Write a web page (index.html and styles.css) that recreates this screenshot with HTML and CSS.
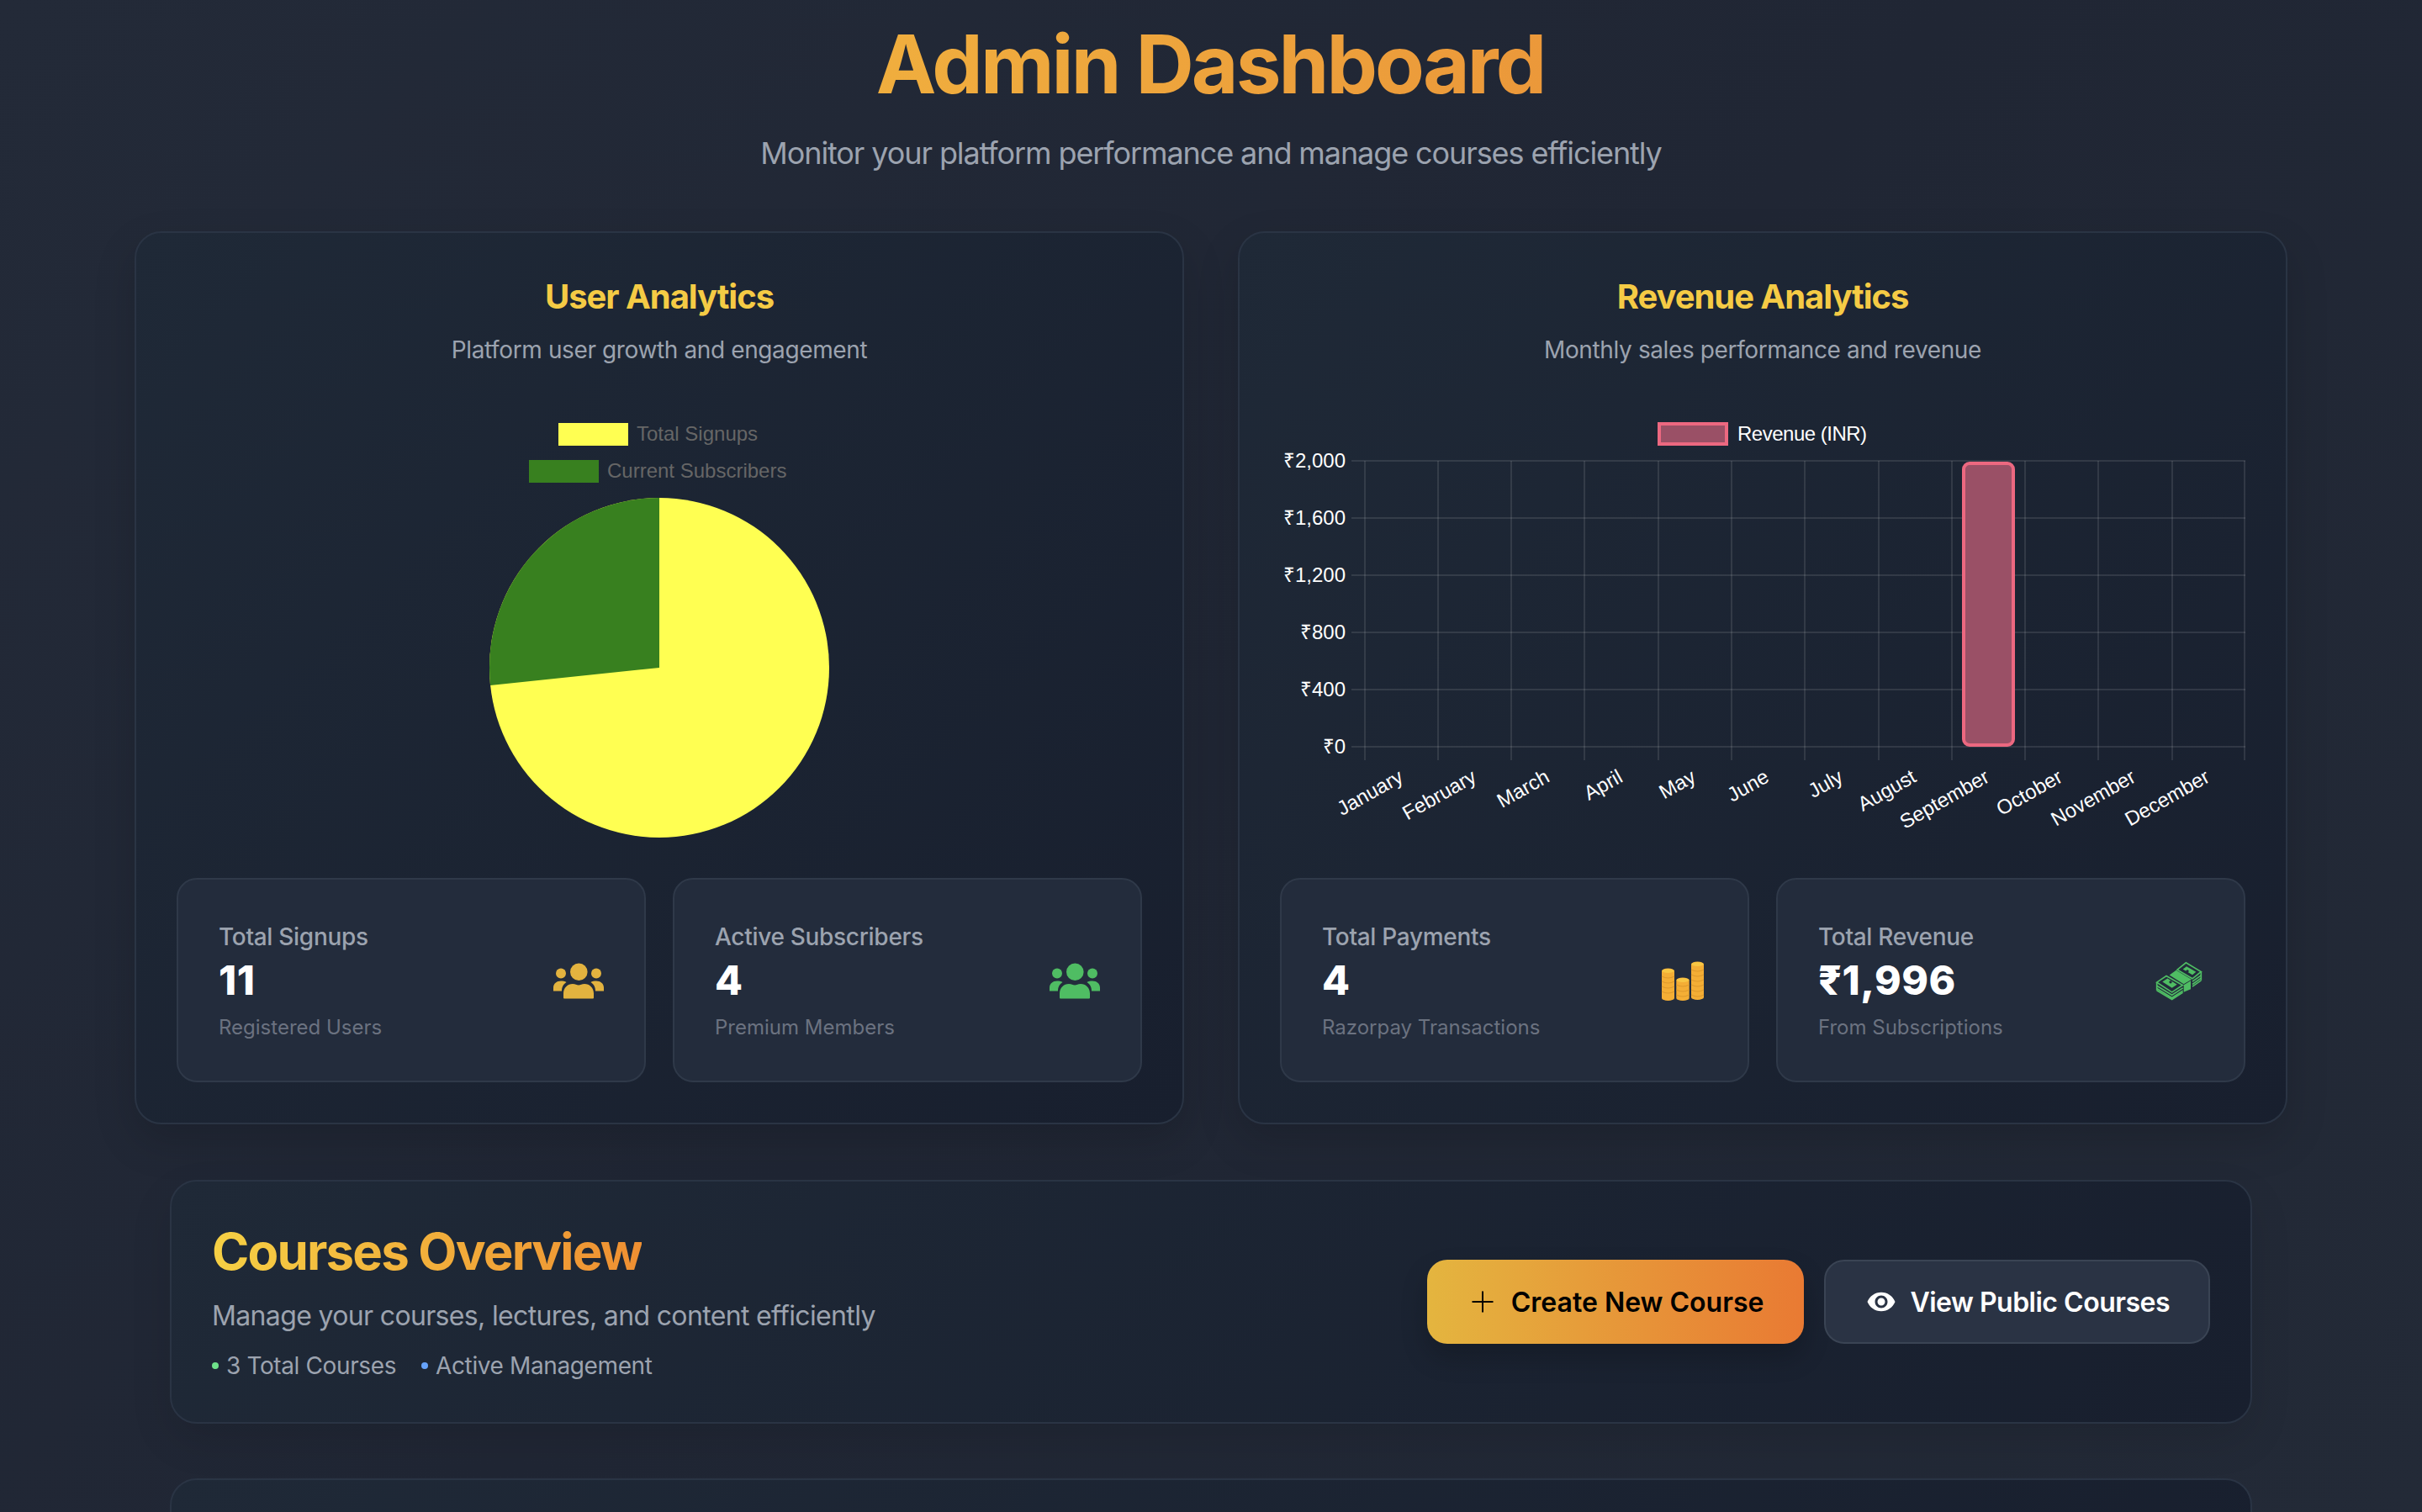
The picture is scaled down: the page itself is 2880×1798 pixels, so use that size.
FILE: index.html
```html
<!DOCTYPE html>
<html lang="en">
<head>
<meta charset="utf-8">
<title>Admin Dashboard</title>
<link rel="stylesheet" href="styles.css">
</head>
<body>
<main class="page">
  <header class="hero">
    <h1 class="hero-title">Admin Dashboard</h1>
    <p class="hero-sub">Monitor your platform performance and manage courses efficiently</p>
  </header>

  <section class="analytics">
    <article class="panel">
      <h2 class="panel-title">User Analytics</h2>
      <p class="panel-sub">Platform user growth and engagement</p>
      <svg class="chart" viewBox="210 469 1148 543" width="1148" height="543">
        <rect x="664" y="503" width="83" height="27" fill="#ffff52"/>
        <text class="legend-muted" x="757" y="524">Total Signups</text>
        <rect x="629" y="547" width="83" height="27" fill="#38801f"/>
        <text class="legend-muted" x="722" y="568">Current Subscribers</text>
        <circle cx="784" cy="794" r="202" fill="#ffff52"/>
        <path d="M784 794 L583.100 815.100 A202 202 0 0 1 784 592 Z" fill="#38801f"/>
      </svg>
      <div class="stats">
        <div class="stat">
          <div class="stat-text">
            <p class="stat-label">Total Signups</p>
            <p class="stat-value">11</p>
            <p class="stat-note">Registered Users</p>
          </div>
          <svg class="stat-icon" viewBox="0 -9.500 60 60" width="60" height="60" fill="#e3b33f">
            <circle cx="30.300" cy="10.300" r="10.300"/><circle cx="9" cy="12" r="6"/><circle cx="51" cy="12" r="6"/>
            <path d="M12 41V36C12 29 17 24.500 23 24.500C26 24.500 28 26 30 26C32 26 34 24.500 37 24.500C43 24.500 48 29 48 36V41Q48 42 47 42H13Q12 42 12 41Z"/>
            <path d="M0 33V29C0 24 4 21 9 21C11 21 14 21 15.500 22.500C12 25 10 28 10 33Z"/>
            <path d="M60 33V29C60 24 56 21 51 21C49 21 46 21 44.500 22.500C48 25 50 28 50 33Z"/>
          </svg>
        </div>
        <div class="stat">
          <div class="stat-text">
            <p class="stat-label">Active Subscribers</p>
            <p class="stat-value">4</p>
            <p class="stat-note">Premium Members</p>
          </div>
          <svg class="stat-icon" viewBox="0 -9.500 60 60" width="60" height="60" fill="#4fbd63">
            <circle cx="30.300" cy="10.300" r="10.300"/><circle cx="9" cy="12" r="6"/><circle cx="51" cy="12" r="6"/>
            <path d="M12 41V36C12 29 17 24.500 23 24.500C26 24.500 28 26 30 26C32 26 34 24.500 37 24.500C43 24.500 48 29 48 36V41Q48 42 47 42H13Q12 42 12 41Z"/>
            <path d="M0 33V29C0 24 4 21 9 21C11 21 14 21 15.500 22.500C12 25 10 28 10 33Z"/>
            <path d="M60 33V29C60 24 56 21 51 21C49 21 46 21 44.500 22.500C48 25 50 28 50 33Z"/>
          </svg>
        </div>
      </div>
    </article>

    <article class="panel">
      <h2 class="panel-title">Revenue Analytics</h2>
      <p class="panel-sub">Monthly sales performance and revenue</p>
      <svg class="chart" viewBox="1522 469 1148 543" width="1148" height="543">
        <rect x="1973" y="504" width="80" height="24" fill="#9a5066" stroke="#ec6880" stroke-width="4"/>
        <text class="legend-light" x="2066" y="524">Revenue (INR)</text>
        <g class="grid">
          <path d="M1607 548H2670M1607 616H2670M1607 684H2670M1607 752H2670M1607 820H2670M1607 888H2670"/>
          <path d="M1623 548V904M1710 548V904M1797 548V904M1884 548V904M1972 548V904M2059 548V904M2146 548V904M2234 548V904M2321 548V904M2408 548V904M2495 548V904M2583 548V904M2669 548V904"/>
        </g>
        <rect x="2335" y="551" width="59" height="335" rx="7" fill="#9a5066" stroke="#ec6880" stroke-width="4"/>
        <g class="y-labels">
          <text x="1600" y="556">₹2,000</text>
          <text x="1600" y="624">₹1,600</text>
          <text x="1600" y="692">₹1,200</text>
          <text x="1600" y="760">₹800</text>
          <text x="1600" y="828">₹400</text>
          <text x="1600" y="896">₹0</text>
        </g>
        <g class="x-labels">
          <text transform="translate(1667 923) rotate(-29.500)">January</text>
          <text transform="translate(1754 923) rotate(-29.500)">February</text>
          <text transform="translate(1841 923) rotate(-29.500)">March</text>
          <text transform="translate(1928 923) rotate(-29.500)">April</text>
          <text transform="translate(2015 923) rotate(-29.500)">May</text>
          <text transform="translate(2102 923) rotate(-29.500)">June</text>
          <text transform="translate(2190 923) rotate(-29.500)">July</text>
          <text transform="translate(2277 923) rotate(-29.500)">August</text>
          <text transform="translate(2364 923) rotate(-29.500)">September</text>
          <text transform="translate(2451 923) rotate(-29.500)">October</text>
          <text transform="translate(2538 923) rotate(-29.500)">November</text>
          <text transform="translate(2626 923) rotate(-29.500)">December</text>
        </g>
      </svg>
      <div class="stats">
        <div class="stat">
          <div class="stat-text">
            <p class="stat-label">Total Payments</p>
            <p class="stat-value">4</p>
            <p class="stat-note">Razorpay Transactions</p>
          </div>
          <svg class="stat-icon" viewBox="0 0 60 60" width="60" height="60">
            <path class="coin-body" d="M6 18.500A7.500 3 0 0 1 21 18.500V51A7.500 3 0 0 1 6 51Z"/>
            <path class="coin-body" d="M23.300 29.500A7.700 3 0 0 1 38.700 29.500V51A7.700 3 0 0 1 23.300 51Z"/>
            <path class="coin-body" d="M41 10.500A7.500 3 0 0 1 56 10.500V50A7.500 3 0 0 1 41 50Z"/>
            <path class="coin-bands" d="M6 25Q13.500 29 21 25M6 31Q13.500 35 21 31M6 37Q13.500 41 21 37M6 43Q13.500 47 21 43M23.300 35Q31 39 38.700 35M23.300 41Q31 45 38.700 41M23.300 47Q31 51 38.700 47M41 17Q48.500 21 56 17M41 23Q48.500 27 56 23M41 29Q48.500 33 56 29M41 35Q48.500 39 56 35M41 41Q48.500 45 56 41M41 47Q48.500 51 56 47"/>
            <ellipse class="coin-top" cx="13.500" cy="18.500" rx="7" ry="2.500"/>
            <ellipse class="coin-top" cx="31" cy="29.500" rx="7.200" ry="2.500"/>
            <ellipse class="coin-top" cx="48.500" cy="10.500" rx="7" ry="2.500"/>
          </svg>
        </div>
        <div class="stat">
          <div class="stat-text">
            <p class="stat-label">Total Revenue</p>
            <p class="stat-value">₹1,996</p>
            <p class="stat-note">From Subscriptions</p>
          </div>
          <svg class="stat-icon" viewBox="177 46.500 180 180" width="60" height="60">
            <path class="money-line" d="M191 155L245 188L284 163M191 165L245 198L284 173M191 172L245 204L284 179M318 140L349 118M318 150L349 128M318 158L349 136"/>
            <path class="money-line" d="M191 143V172M349 105V136"/>
            <polygon class="money-outline" points="191,143 225,120 283,153 245,178"/>
            <polygon class="money-fill" points="211,141 229,129 263,151 245,163"/>
            <circle class="money-hole" cx="240" cy="142" r="5"/>
            <polygon class="money-outline" points="264,98 295,73 349,105 318,130"/>
            <polygon class="money-fill" points="284,96 297,86 331,106 318,116"/>
            <circle class="money-hole" cx="300" cy="103" r="5"/>
            <polygon class="money-fill" points="236,117 260,100 315,133 287,149"/>
            <polygon class="money-fill" points="287,152 312,137 312,167 287,178"/>
          </svg>
        </div>
      </div>
    </article>
  </section>

  <section class="overview">
    <div class="overview-text">
      <h2 class="overview-title">Courses Overview</h2>
      <p class="overview-sub">Manage your courses, lectures, and content efficiently</p>
      <div class="pills">
        <span class="pill"><span class="dot dot-green"></span>3 Total Courses</span>
        <span class="pill"><span class="dot dot-blue"></span>Active Management</span>
      </div>
    </div>
    <div class="actions">
      <button class="btn btn-primary">
        <svg viewBox="0 0 36 36" width="36" height="36" class="btn-icon"><path d="M18 5.500V30.500M5.500 18H30.500" stroke="#000" stroke-width="2" fill="none"/></svg>
        Create New Course
      </button>
      <button class="btn btn-secondary">
        <svg viewBox="0 0 24 24" width="36" height="36" class="btn-icon" fill="#fff"><path fill-rule="evenodd" d="M12 4.500C7 4.500 2.730 7.610 1 12c1.730 4.390 6 7.500 11 7.500s9.270-3.110 11-7.500c-1.730-4.390-6-7.500-11-7.500zM12 17c-2.760 0-5-2.240-5-5s2.240-5 5-5 5 2.240 5 5-2.240 5-5 5zm0-8c-1.660 0-3 1.340-3 3s1.340 3 3 3 3-1.340 3-3-1.340-3-3-3z"/></svg>
        View Public Courses
      </button>
    </div>
  </section>

  <section class="next-panel"></section>
</main>
</body>
</html>
```

FILE: styles.css
```css
* { box-sizing: border-box; }
html, body { margin: 0; padding: 0; }
body {
  height: 1798px;
  overflow: hidden;
  background: linear-gradient(135deg, #232a38 0%, #202634 50%, #232a37 100%);
  font-family: Inter, "Noto Sans", sans-serif;
  color: #fff;
}
p, h1, h2 { margin: 0; }
.page { padding: 28px 160px 0; }

.hero { text-align: center; margin-bottom: 65px; }
.hero-title {
  font-size: 96px;
  line-height: 96px;
  font-weight: 700;
  letter-spacing: -2.900px;
  background: linear-gradient(100deg, #f0ae3e, #eb983a);
  -webkit-background-clip: text;
  background-clip: text;
  color: transparent;
  width: fit-content;
  margin: 0 auto 30px;
  position: relative;
  left: -1px;
}
.hero-sub { font-size: 36px; line-height: 56px; letter-spacing: -1.100px; color: #9ca3af; }

.analytics { display: grid; grid-template-columns: 1fr 1fr; gap: 64px; margin-bottom: 66px; }
.panel {
  border: 2px solid #2a3444;
  border-radius: 32px;
  padding: 48px;
  background: linear-gradient(135deg, #1f2937 0%, #181f2e 100%);
  box-shadow: 0 20px 50px rgba(0, 0, 0, 0.15);
  text-align: center;
}
.panel-title { font-size: 40px; line-height: 56px; font-weight: 700; color: #f5cb45; letter-spacing: -1.050px; }
.panel-sub { font-size: 28px; line-height: 40px; margin-top: 15px; letter-spacing: -0.380px; color: #9ca3af; }
.chart { display: block; margin: 33px 0 32px; }
.chart text { font-family: "Liberation Sans", Arial, sans-serif; font-size: 24px; }
.legend-muted { fill: #666; }
.legend-light { fill: #fff; letter-spacing: -0.500px; }
.grid path { stroke: rgba(255, 255, 255, 0.1); stroke-width: 2; fill: none; }
.y-labels text { fill: #fff; text-anchor: end; }
.x-labels text { fill: #fff; text-anchor: end; dominant-baseline: middle; }

.stats { display: grid; grid-template-columns: 1fr 1fr; gap: 32px; }
.stat {
  display: flex;
  align-items: center;
  justify-content: space-between;
  height: 243px;
  padding: 48px;
  border: 2px solid #2f3949;
  border-radius: 24px;
  background: #232c3c;
  text-align: left;
}
.stat-icon { flex: none; }
.stat-label { font-size: 28px; line-height: 40px; font-weight: 500; letter-spacing: -0.300px; color: #9ca3af; }
.stat-value { font-size: 48px; line-height: 64px; font-weight: 800; letter-spacing: 0.500px; color: #fff; }
.stat-note { font-size: 24px; line-height: 32px; margin-top: 8px; color: #6b7280; }
.coin-body { fill: #f4ae35; }
.coin-bands { stroke: #df9a2c; stroke-width: 1.200; fill: none; }
.coin-top { fill: #f8c744; }
.money-line { stroke: #4fbd63; stroke-width: 5; fill: none; }
.money-outline { stroke: #4fbd63; stroke-width: 5; fill: #222b3b; }
.money-fill { fill: #4fbd63; }
.money-hole { fill: #222b3b; }

.overview {
  width: 2476px;
  margin: 0 42px 65px;
  height: 290px;
  display: flex;
  align-items: center;
  justify-content: space-between;
  padding: 0 48px;
  border: 2px solid #2a3444;
  border-radius: 32px;
  background: linear-gradient(135deg, #1f2937 0%, #181f2e 100%);
  box-shadow: 0 20px 50px rgba(0, 0, 0, 0.1);
}
.overview-title {
  font-size: 60px;
  line-height: 72px;
  font-weight: 700;
  letter-spacing: -1.850px;
  width: fit-content;
  background: linear-gradient(90deg, #f6d044, #ee8f32);
  -webkit-background-clip: text;
  background-clip: text;
  color: transparent;
}
.overview-sub { font-size: 32px; line-height: 48px; margin-top: 17px; letter-spacing: -0.650px; color: #9ca3af; }
.pills { display: flex; gap: 30px; margin-top: 15px; }
.pill { display: flex; align-items: center; font-size: 28px; line-height: 40px; letter-spacing: -0.380px; color: #9ca3af; }
.dot { width: 8px; height: 8px; border-radius: 50%; margin-right: 9px; }
.dot-green { background: #6ee18a; }
.dot-blue { background: #66a3fb; }
.actions { display: flex; gap: 24px; }
.btn {
  display: flex;
  align-items: center;
  gap: 16px;
  height: 100px;
  padding: 0 48px;
  border-radius: 24px;
  font-family: Inter, sans-serif;
  font-size: 32px;
  font-weight: 600;
}
.btn-icon { flex: none; }
.btn-primary {
  border: 0;
  color: #000;
  background: linear-gradient(90deg, #e4b53f, #e97a33);
  box-shadow: 0 16px 32px rgba(0, 0, 0, 0.2);
}
.btn-secondary {
  padding: 0 46px 0 48px;
  border: 2px solid #3a4454;
  letter-spacing: -0.500px;
  color: #fff;
  background: #2a3344;
}

.next-panel {
  width: 2476px;
  margin: 0 42px;
  height: 200px;
  border: 2px solid #2a3444;
  border-radius: 32px;
  background: linear-gradient(135deg, #1f2937 0%, #181f2e 100%);
}
```
